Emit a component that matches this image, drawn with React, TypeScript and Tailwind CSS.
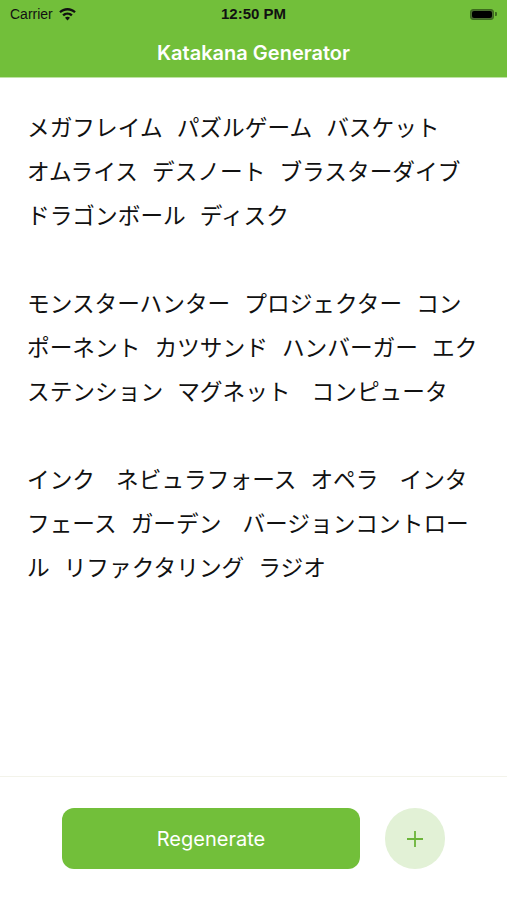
import React from 'react';

const paragraphs: string[][] = [
  ['メガフレイム パズルゲーム バスケット', 'オムライス デスノート ブラスターダイブ', 'ドラゴンボール ディスク'],
  ['モンスターハンター プロジェクター コン', 'ポーネント カツサンド ハンバーガー エク', 'ステンション マグネット  コンピュータ'],
  ['インク  ネビュラフォース オペラ  インタ', 'フェース ガーデン  バージョンコントロー', 'ル リファクタリング ラジオ'],
];

// a single space is a narrow gap, two spaces a wider one
const Line: React.FC<{ text: string }> = ({ text }) => (
  <div className="h-[44px] leading-[44px] whitespace-nowrap">
    {text.split(/( +)/).map((part, i) =>
      part.startsWith(' ') ? (
        <span key={i} className={`inline-block ${part.length > 1 ? 'w-[21px]' : 'w-[14px]'}`} />
      ) : (
        <span key={i}>{part}</span>
      )
    )}
  </div>
);

const Wifi = () => (
  <svg width="17" height="13" viewBox="0 0 17 13" className="ml-[6px]">
    <path d="M8.5 0C5.2 0 2.3 1.3 0.2 3.4l1.6 1.7C3.5 3.4 5.9 2.4 8.5 2.4s5 1 6.7 2.7l1.6-1.7C14.7 1.3 11.8 0 8.5 0z" fill="#111" />
    <path d="M8.5 4.4c-2 0-3.9 0.8-5.2 2.1l1.6 1.7c0.9-0.9 2.2-1.5 3.6-1.5s2.7 0.6 3.6 1.5l1.6-1.7C12.4 5.2 10.5 4.4 8.5 4.4z" fill="#111" />
    <path d="M8.5 8.7c-1 0-1.9 0.4-2.5 1L8.5 12.4l2.5-2.7c-0.6-0.6-1.5-1-2.5-1z" fill="#111" />
  </svg>
);

const Battery = () => (
  <div className="flex items-center">
    <div className="w-[24px] h-[11px] rounded-[3px] border border-[#3d6b1d] bg-[#4a6d30] p-[1px]">
      <div className="w-full h-full rounded-[2px] bg-black" />
    </div>
    <div className="w-[2px] h-[4px] rounded-r-[1px] bg-[#3d6b1d] ml-[1px]" />
  </div>
);

export default function App() {
  return (
    <div className="h-[900px] w-full flex flex-col bg-white font-['Inter',sans-serif]">
      {/* status + nav bar */}
      <div className="bg-[#72bf3a] border-b border-[#bfe3a4]">
        <div className="h-[28px] flex items-center justify-between px-[10px] font-['Liberation_Sans',sans-serif] text-[#111]">
          <div className="flex items-center w-[120px] text-[14px]">
            Carrier
            <Wifi />
          </div>
          <div className="text-[15px] font-bold">12:50 PM</div>
          <div className="w-[120px] flex justify-end pr-[0px]">
            <Battery />
          </div>
        </div>
        <div className="h-[49px] flex items-center justify-center text-white text-[20px] font-semibold">
          Katakana Generator
        </div>
      </div>

      {/* generated words */}
      <div className="flex-1 px-[27px] pt-[27px] text-[22.7px] text-[#111] font-['Noto_Sans_CJK_JP',sans-serif]">
        {paragraphs.map((lines, i) => (
          <div key={i} className={i > 0 ? 'mt-[44px]' : ''}>
            {lines.map((l, j) => (
              <Line key={j} text={l} />
            ))}
          </div>
        ))}
      </div>

      {/* footer actions */}
      <div className="border-t border-[#f3f3ea] pt-[31px] pb-[31px] flex justify-center gap-[25px]">
        <button className="w-[298px] h-[61px] rounded-[12px] bg-[#72bf3a] text-white text-[20px]">
          Regenerate
        </button>
        <button className="w-[60px] h-[61px] rounded-full bg-[#e2f1d6] flex items-center justify-center">
          <svg width="18" height="18" viewBox="0 0 18 18">
            <path d="M9 1v16M1 9h16" stroke="#6cb43a" strokeWidth="1.8" />
          </svg>
        </button>
      </div>
    </div>
  );
}
